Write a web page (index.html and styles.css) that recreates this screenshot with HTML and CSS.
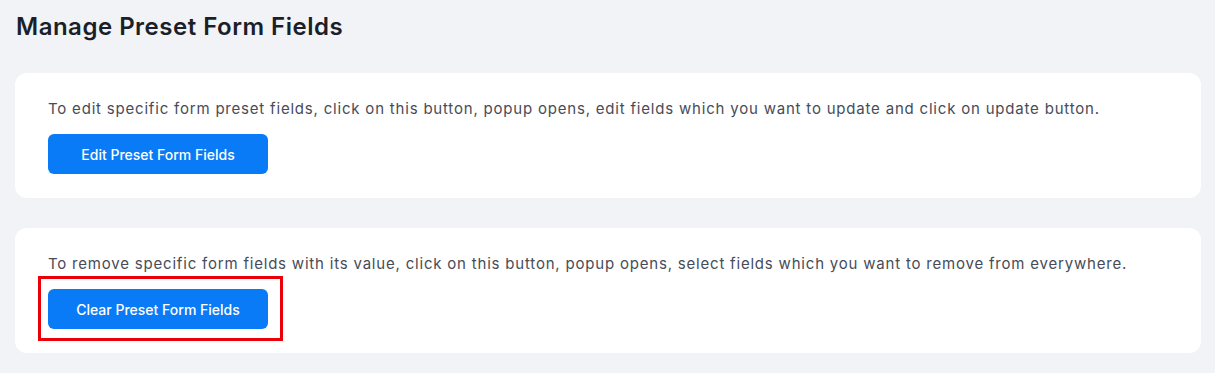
FILE: index.html
```html
<!DOCTYPE html>
<html lang="en">
<head>
<meta charset="utf-8">
<title>Manage Preset Form Fields</title>
<link rel="stylesheet" href="styles.css">
</head>
<body>
<main class="page">
  <h1 class="title">Manage Preset Form Fields</h1>
  <section class="card">
    <p class="desc">To edit specific form preset fields, click on this button, popup opens, edit fields which you want to update and click on update button.</p>
    <div class="actions"><button class="btn">Edit Preset Form Fields</button></div>
  </section>
  <section class="card">
    <p class="desc">To remove specific form fields with its value, click on this button, popup opens, select fields which you want to remove from everywhere.</p>
    <div class="actions"><span class="highlight"><button class="btn">Clear Preset Form Fields</button></span></div>
  </section>
</main>
</body>
</html>
```
FILE: styles.css
```css
* { box-sizing: border-box; }
html, body { margin: 0; padding: 0; }
body {
  background: #f1f3f6;
  font-family: "Inter", "Noto Sans", sans-serif;
  color: #4a4f5b;
}
.page {
  padding: 12px 14px 20px 15px;
  display: flex;
  flex-direction: column;
  gap: 30px;
}
.title {
  margin: 0 0 1px 1px;
  font-size: 24px;
  line-height: 30px;
  font-weight: 600;
  letter-spacing: 0.5px;
  color: #1b1f2a;
}
.card {
  background: #fff;
  border-radius: 12px;
  padding: 24px 33px;
  display: flex;
  flex-direction: column;
  gap: 13px;
}
.desc {
  margin: 0;
  font-size: 15px;
  line-height: 24px;
  letter-spacing: 0.8px;
  color: #474c58;
}
.actions { display: flex; }
.btn {
  width: 220px;
  height: 40px;
  border: 0;
  border-radius: 6px;
  background: #0a7bf6;
  color: #fff;
  font-family: inherit;
  font-size: 14px;
  font-weight: 500;
  cursor: pointer;
}
.highlight {
  position: relative;
  display: flex;
}
.highlight::after {
  content: "";
  position: absolute;
  left: -10px;
  top: -13px;
  right: -15px;
  bottom: -12px;
  border: 3px solid #ec0008;
  pointer-events: none;
}
```
